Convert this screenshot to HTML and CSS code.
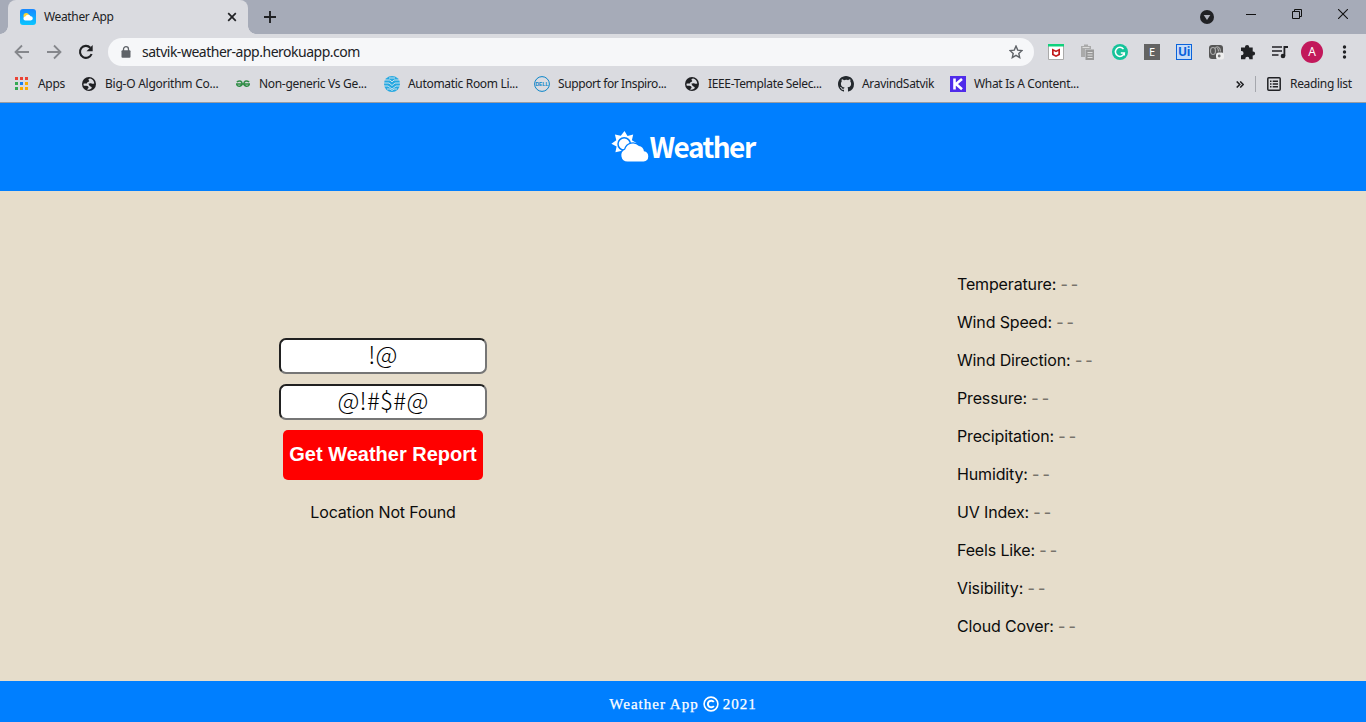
FILE: index.html
```html
<!DOCTYPE html>
<html lang="en">
<head>
<meta charset="utf-8">
<title>Weather App</title>
<link rel="stylesheet" href="styles.css">
</head>
<body>
<svg width="0" height="0" class="defs">
  <symbol id="globe" viewBox="0 0 14 14"><circle cx="7" cy="7" r="7" fill="#202124"/><path d="M8.300 1.600c-2 .3-2.300 1.300-1.300 2 .9.700-.6 1.500-1.500 1.600-.6.100 0 1.300-1 1.300-.8 0-1.600-.2-3 .2 0 .9 0 1.400.3 2.100 1.500-.1 2.600-.2 3.500.3.900.5 1.400.8 1.200 1.600-.2.900-1.300 1-1.500 1.800 1.800.5 3.600-.2 4.600-1.200.5-.8-.1-1.600-1.100-1.900-1.500-.4-1.400-2-2.300-2.600 1.100-.5 2.300-.8 3.400-.3.800.4 1.500.3 2.700.1C12 4.200 10.600 2.300 8.300 1.600z" fill="#dadbe0"/></symbol>
</svg>
<div class="tabstrip">
  <div class="tab">
    <svg class="favicon" viewBox="0 0 16 16"><defs><linearGradient id="sky" x2="0" y2="1"><stop stop-color="#1787ff"/><stop offset="1" stop-color="#09c6ff"/></linearGradient></defs><rect width="16" height="16" rx="3" fill="url(#sky)"/><circle cx="6.200" cy="6.700" r="2.700" fill="#ffd633"/><path d="M5.500 11.500a2 2 0 0 1-.2-4 3 3 0 0 1 5.300-.2 2.100 2.100 0 0 1 .2 4.200z" fill="#fff"/></svg>
    <span class="tab-title">Weather App</span>
    <svg class="tab-close" viewBox="0 0 10 10"><path d="M1.200 1.200l7.600 7.600M8.800 1.200L1.200 8.800" stroke="#202124" stroke-width="1.700"/></svg>
  </div>
  <svg class="new-tab" viewBox="0 0 12 12"><path d="M6 0v12M0 6h12" stroke="#202124" stroke-width="1.900"/></svg>
  <div class="window-controls">
    <svg width="14" height="14" viewBox="0 0 14 14" class="media"><circle cx="7" cy="7" r="7" fill="#202124"/><path d="M3.700 5h6.600L7 10z" fill="#b0b3bd"/></svg>
    <svg width="10" height="10" viewBox="0 0 10 10"><path d="M0 5.500h10" stroke="#111"/></svg>
    <svg width="10" height="10" viewBox="0 0 10 10" fill="none" stroke="#111"><path d="M.5 2.500h7v7h-7zM2.500 2.500v-2h7v7h-2"/></svg>
    <svg width="10" height="10" viewBox="0 0 10 10"><path d="M0 0l10 10M10 0L0 10" stroke="#111" stroke-width="1.100"/></svg>
  </div>
</div>
<div class="toolbar">
  <svg class="nav" viewBox="0 0 16 16" fill="none" stroke="#85878c" stroke-width="1.800"><path d="M15 8H2M8 1.500L1.500 8 8 14.500"/></svg>
  <svg class="nav" viewBox="0 0 16 16" fill="none" stroke="#85878c" stroke-width="1.800"><path d="M1 8h13M8 1.500L14.500 8 8 14.500"/></svg>
  <svg class="nav reload" viewBox="0 0 16 16"><path d="M13.600 10A6 6 0 1 1 12.300 3.700" fill="none" stroke="#202124" stroke-width="2.100"/><path d="M14.700 1v6.200H8.500z" fill="#202124"/></svg>
  <div class="address">
    <svg class="lock" viewBox="0 0 10 12"><path d="M2.500 5V3.200a2.500 2.500 0 0 1 5 0V5" fill="none" stroke="#5f6368" stroke-width="1.300"/><rect x=".5" y="4.300" width="9" height="7.400" rx="1" fill="#5f6368"/></svg>
    <span class="url">satvik-weather-app.herokuapp.com</span>
    <svg class="star" viewBox="0 0 14 14"><path d="M7 1.100l1.700 4 4.300.4-3.200 2.900.9 4.200L7 10.400l-3.700 2.200.9-4.200L1 5.500l4.300-.4z" fill="none" stroke="#5f6368" stroke-width="1.400"/></svg>
  </div>
  <div class="extensions">
    <svg viewBox="0 0 16 16"><path d="M.5.500h15v15H.5z" fill="#fff" stroke="#aaa"/><path d="M0 0h16v2.500H0z" fill="#10d17c"/><path d="M4 4.500l4 2 4-2V11l-4 2-4-2zM5.700 7v3L8 11.200l2.300-1.200V7L8 8.200z" fill="#c01818" fill-rule="evenodd"/></svg>
    <svg viewBox="0 0 16 16"><path d="M1 2h3V.5h4V2h3v3H5v8H1z" fill="#aaa"/><path d="M2.500 3.500h7" stroke="#ddd"/><path d="M5.500 5.500H14V16H5.500z" fill="#999"/><path d="M7.500 8.500h5M7.500 11h5M7.500 13.500h5" stroke="#dedede"/></svg>
    <svg viewBox="0 0 16 16"><circle cx="8" cy="8" r="8" fill="#15c39a"/><path d="M11.500 5.100A4.500 4.500 0 1 0 12.300 9H8.800M12.300 9v2.500" fill="none" stroke="#fff" stroke-width="1.500"/></svg>
    <span class="ext-e">E</span>
    <span class="ext-ui">Ui</span>
    <svg viewBox="0 0 16 16"><rect x="1" y="1" width="14" height="14" rx="3" fill="#555"/><ellipse cx="5" cy="7" rx="2.500" ry="3.500" fill="none" stroke="#ababab" stroke-width="1.200"/><path d="M7 4.500c2-3 5.500-1.500 5.500 3M9 4.500c1 0 1.500 1 1.500 3" fill="none" stroke="#ababab" stroke-width="1.200"/><rect x="8" y="8.500" width="8" height="7" rx="2.500" fill="#eee"/><circle cx="11.200" cy="12" r="1.400" fill="#777"/></svg>
    <svg viewBox="0 0 16 16"><path d="M1 3.500h4V3a2.100 2.100 0 0 1 4.200 0v.5h3.500v4h.4a2 2 0 0 1 0 4h-.4v3.700H9.300v-.5a2 2 0 0 0-4 0v.5H1v-4h.5a2 2 0 0 0 0-4.100H1z" fill="#202124"/></svg>
    <svg viewBox="0 0 16 16"><path d="M0 3h10M0 7h10M0 11h6.500" stroke="#202124" stroke-width="1.600"/><path d="M12.400 12V3H16" fill="none" stroke="#202124" stroke-width="1.800"/><circle cx="11" cy="12" r="2.300" fill="#202124"/></svg>
    <span class="avatar">A</span>
    <svg viewBox="0 0 16 16" fill="#202124"><circle cx="8.500" cy="3" r="1.700"/><circle cx="8.500" cy="8" r="1.700"/><circle cx="8.500" cy="13" r="1.700"/></svg>
  </div>
</div>
<div class="bookmarks">
  <div class="bm bm-apps"><svg viewBox="0 0 14 14"><path d="M0 0h3v3H0zM5 0h3v3H5zM10 0h3v3h-3z" fill="#ea4335"/><path d="M0 5h3v3H0z" fill="#34a853"/><path d="M5 5h3v3H5z" fill="#1a80f0"/><path d="M10 5h3v3h-3zM5 10h3v3H5zM10 10h3v3h-3z" fill="#f9ab00"/><path d="M0 10h3v3H0z" fill="#34a853"/></svg><span>Apps</span></div>
  <div class="bm bm-bigo"><svg><use href="#globe"/></svg><span>Big-O Algorithm Co...</span></div>
  <div class="bm bm-generic"><svg viewBox="0 0 14 14"><path d="M.8 4.800c3.500-1.700 5.300-.4 5.300 2s-4.700 3.800-5.300.5M0 7.100h14M13.200 4.800c-3.500-1.700-5.300-.4-5.300 2s4.700 3.800 5.300.5" fill="none" stroke="#2f8d46" stroke-width="1.500"/></svg><span>Non-generic Vs Ge...</span></div>
  <div class="bm bm-room"><svg class="big" viewBox="0 0 16 16"><circle cx="8" cy="8" r="8" fill="#27a9e1"/><path d="M1 4h5l2 2 2-2h5M0 7h5l3 2.500L11 7h5M0 10h4l4 3 4-3h4M5 2h6M3 13h3l2 1.500 2-1.500h3" fill="none" stroke="#d7e5ee" stroke-width=".9"/></svg><span>Automatic Room Li...</span></div>
  <div class="bm bm-dell"><svg class="big" viewBox="0 0 16 16"><circle cx="8" cy="8" r="7.400" fill="none" stroke="#0a85c9" stroke-width="1"/><text x="8" y="9.900" text-anchor="middle" class="dell">DELL</text></svg><span>Support for Inspiro...</span></div>
  <div class="bm bm-ieee"><svg><use href="#globe"/></svg><span>IEEE-Template Selec...</span></div>
  <div class="bm bm-git"><svg class="big" viewBox="0 0 16 16"><path fill="#24292e" fill-rule="evenodd" d="M8 0C3.580 0 0 3.580 0 8c0 3.540 2.290 6.530 5.470 7.590.4.070.55-.17.55-.38 0-.19-.01-.82-.01-1.490-2.010.37-2.530-.49-2.690-.94-.09-.23-.48-.94-.82-1.130-.28-.15-.68-.52-.01-.53.63-.01 1.080.58 1.230.82.72 1.210 1.870.87 2.330.66.07-.52.28-.87.51-1.070-1.780-.2-3.640-.89-3.640-3.950 0-.87.31-1.590.82-2.150-.08-.2-.36-1.020.08-2.120 0 0 .67-.21 2.200.82A7.600 7.600 0 0 1 8 3.860c.68 0 1.360.09 2 .27 1.530-1.040 2.200-.82 2.200-.82.44 1.100.16 1.920.08 2.120.51.56.82 1.270.82 2.150 0 3.070-1.870 3.750-3.650 3.950.29.25.54.73.54 1.480 0 1.070-.01 1.930-.01 2.200 0 .21.15.46.55.38A8 8 0 0 0 16 8c0-4.420-3.580-8-8-8z"/></svg><span>AravindSatvik</span></div>
  <div class="bm bm-k"><svg class="big" viewBox="0 0 16 16"><path d="M0 0h16v16H0z" fill="#4f2bea"/><path d="M4.500 2.500v11M12 3L6 8l6 5.200" fill="none" stroke="#fff" stroke-width="2.600"/></svg><span>What Is A Content...</span></div>
  <svg class="more" viewBox="0 0 8 7"><path d="M.7.5l3 3-3 3M4.200.5l3 3-3 3" fill="none" stroke="#202124" stroke-width="1.600"/></svg>
  <div class="reading"><svg viewBox="0 0 14 14"><rect x=".8" y=".8" width="12.400" height="12.400" rx="1" fill="none" stroke="#202124" stroke-width="1.500"/><path d="M3 4.200h1.500M3 7h1.500M3 9.800h1.500M5.700 4.200H11M5.700 7H11M5.700 9.800H11" stroke="#202124" stroke-width="1.400"/></svg><span>Reading list</span></div>
</div>
<header class="site-header">
  <svg class="logo" viewBox="0 0 38 32"><path d="M13.500 0l3 4.900 5.700-1.500-1.300 5.800 4.900 3.100-4.900 3.200 1 5.700-5.600-1.100-3.100 4.900-3.200-4.900-5.600 1.200L5.600 15.500.4 12.800l4.900-3.600-1.400-5.800L9.800 4.700z" fill="#fff"/><circle cx="13.200" cy="13" r="6.200" fill="#fff" stroke="#007fff" stroke-width="1.500"/><path d="M16.500 30.500a6.300 6.300 0 0 1-2.300-12.100 8 8 0 0 1 13.700-3.300 5.200 5.200 0 0 1 5 5.100 5.200 5.200 0 0 1-.3 10.300z" fill="#fff" stroke="#007fff" stroke-width="2.400" paint-order="stroke"/></svg>
  <h1>Weather</h1>
</header>
<main>
  <form class="search">
    <input type="text" value="!@" aria-label="City">
    <input type="text" value="@!#$#@" aria-label="Country">
    <button type="button">Get Weather Report</button>
    <p>Location Not Found</p>
  </form>
  <ul class="report">
    <li>Temperature: <i>- -</i></li>
    <li>Wind Speed: <i>- -</i></li>
    <li>Wind Direction: <i>- -</i></li>
    <li>Pressure: <i>- -</i></li>
    <li>Precipitation: <i>- -</i></li>
    <li>Humidity: <i>- -</i></li>
    <li>UV Index: <i>- -</i></li>
    <li>Feels Like: <i>- -</i></li>
    <li>Visibility: <i>- -</i></li>
    <li>Cloud Cover: <i>- -</i></li>
  </ul>
</main>
<footer><span>Weather App</span><svg viewBox="0 0 16 16" fill="none" stroke="#fff"><circle cx="8" cy="8" r="6.900" stroke-width="1.600"/><path d="M10.800 10a3.300 3.300 0 1 1 0-4" stroke-width="2"/></svg><span>2021</span></footer>
</body>
</html>
```
FILE: styles.css
```css
* { box-sizing: border-box; }
body { margin: 0; width: 1366px; height: 722px; overflow: hidden; display: flex; flex-direction: column; font-family: "Noto Sans", sans-serif; color: #202124; }
svg { display: block; flex: none; }
.defs { position: absolute; }

.tabstrip { height: 34px; flex: none; background: #a6abb8; display: flex; align-items: flex-start; padding-left: 8px; }
.tab { position: relative; width: 240px; height: 34px; background: #dadbe0; border-radius: 8px 8px 0 0; display: flex; align-items: center; padding: 0 11px 0 12px; }
.tab::before, .tab::after { content: ""; position: absolute; bottom: 0; width: 8px; height: 8px; }
.tab::before { left: -8px; background: radial-gradient(circle at 0 0, #a6abb8 7.500px, #dadbe0 8px); }
.tab::after { right: -8px; background: radial-gradient(circle at 100% 0, #a6abb8 7.500px, #dadbe0 8px); }
.favicon { width: 16px; height: 16px; margin-right: 8px; }
.tab-title { flex: 1; font-size: 12px; letter-spacing: -.35px; white-space: nowrap; padding-bottom: 1px; }
.tab-close { width: 10px; height: 10px; }
.new-tab { width: 12px; height: 12px; margin: 11px 0 0 16px; }
.window-controls { margin-left: auto; display: flex; gap: 36px; padding: 9px 18px 0 0; }
.media { margin: 1px -4px 0 0; }

.toolbar { height: 36px; flex: none; background: #dadbe0; display: flex; align-items: center; padding-left: 14px; }
.nav { width: 16px; height: 16px; margin-right: 16px; }
.reload { margin-right: 14px; }
.address { width: 926px; height: 28px; border-radius: 14px; background: #f6f7f9; display: flex; align-items: center; padding: 0 11px 0 13px; }
.lock { width: 10px; height: 12px; }
.url { flex: 1; margin-left: 11px; font-size: 14px; letter-spacing: -.49px; line-height: 20px; }
.star { width: 14px; height: 14px; }
.extensions { display: flex; align-items: center; gap: 16px; margin-left: 14px; }
.extensions > svg { width: 16px; height: 16px; }
.ext-e, .ext-ui { width: 16px; height: 16px; line-height: 16px; text-align: center; font-size: 11px; }
.ext-e { background: #636363; color: #fff; }
.ext-ui { background: #c5dcf7; color: #0a62db; border: 1px solid #0a62db; font-weight: bold; line-height: 14px; font-size: 12px; letter-spacing: -.4px; }
.avatar { width: 22px; height: 22px; margin: 0 -3px; border-radius: 50%; background: #c2185b; color: #fff; font-size: 12px; line-height: 22px; text-align: center; }

.bookmarks { height: 33px; flex: none; background: #dadbe0; border-bottom: 1px solid #999ca2; display: flex; align-items: center; padding: 0 14px 4px 15px; font-size: 12px; white-space: nowrap; letter-spacing: -.32px; }
.bookmarks span { padding-bottom: 2px; }
.bm { display: flex; align-items: center; gap: 9px; }
.bm svg, .reading svg { width: 14px; height: 14px; }
.bm .big { width: 16px; height: 16px; margin-right: -1px; }
.bm-apps { width: 67px; }
.bm-bigo { width: 154px; letter-spacing: -.25px; }
.bm-generic { width: 148px; }
.bm-room { width: 150px; }
.bm-dell { width: 151px; letter-spacing: -.4px; }
.bm-ieee { width: 153px; letter-spacing: -.35px; }
.bm-git { width: 112px; }
.dell { font: bold 5px "Liberation Sans", sans-serif; fill: #0a85c9; letter-spacing: 0; }
.more { width: 8px; height: 7px; margin-left: auto; }
.reading { display: flex; align-items: center; gap: 9px; margin-left: 11px; padding-left: 11px; width: 97px; height: 16px; border-left: 1px solid #a5a7ad; }

.site-header { height: 88px; flex: none; background: #007fff; display: flex; align-items: center; justify-content: center; }
.logo { width: 38px; height: 32px; }
h1 { margin: 0 0 2px; color: #fff; font: bold 28px/40px "Noto Sans CJK JP", sans-serif; letter-spacing: -1.5px; }

main { flex: 1; background: #e6ddcb; display: grid; grid-template-columns: 766px 1fr; align-items: start; color: #0c0c0c; font: 16px/22px Inter, sans-serif; }
.search { display: flex; flex-direction: column; align-items: center; padding-top: 147px; }
input { width: 208px; height: 36px; margin: 0 0 10px; padding: 0 2px 5px; border: 2px inset #767676; border-radius: 7px; background: #fff; color: #000; text-align: center; font: 300 24px/27px "Noto Sans CJK JP", sans-serif; letter-spacing: .3px; }
button { width: 200px; height: 50px; padding: 0 0 2px; border: 0; border-radius: 5px; background: #f00; color: #fff; font: bold 20px "Liberation Sans", sans-serif; white-space: nowrap; }
p { margin: 21px 0 0; letter-spacing: -.15px; }
.report { list-style: none; margin: 0; padding: 82px 0 0 191px; display: flex; flex-direction: column; gap: 16px; letter-spacing: -.15px; }
i { font-style: normal; font-weight: 500; color: #77736b; word-spacing: -1px; }

footer { height: 41px; flex: none; background: #007fff; color: #fff; display: flex; align-items: center; justify-content: center; gap: 4px; padding-top: 5px; font: 15px "Liberation Serif", serif; letter-spacing: 1px; -webkit-text-stroke: .25px #fff; }
footer svg { width: 16px; height: 16px; }
```
